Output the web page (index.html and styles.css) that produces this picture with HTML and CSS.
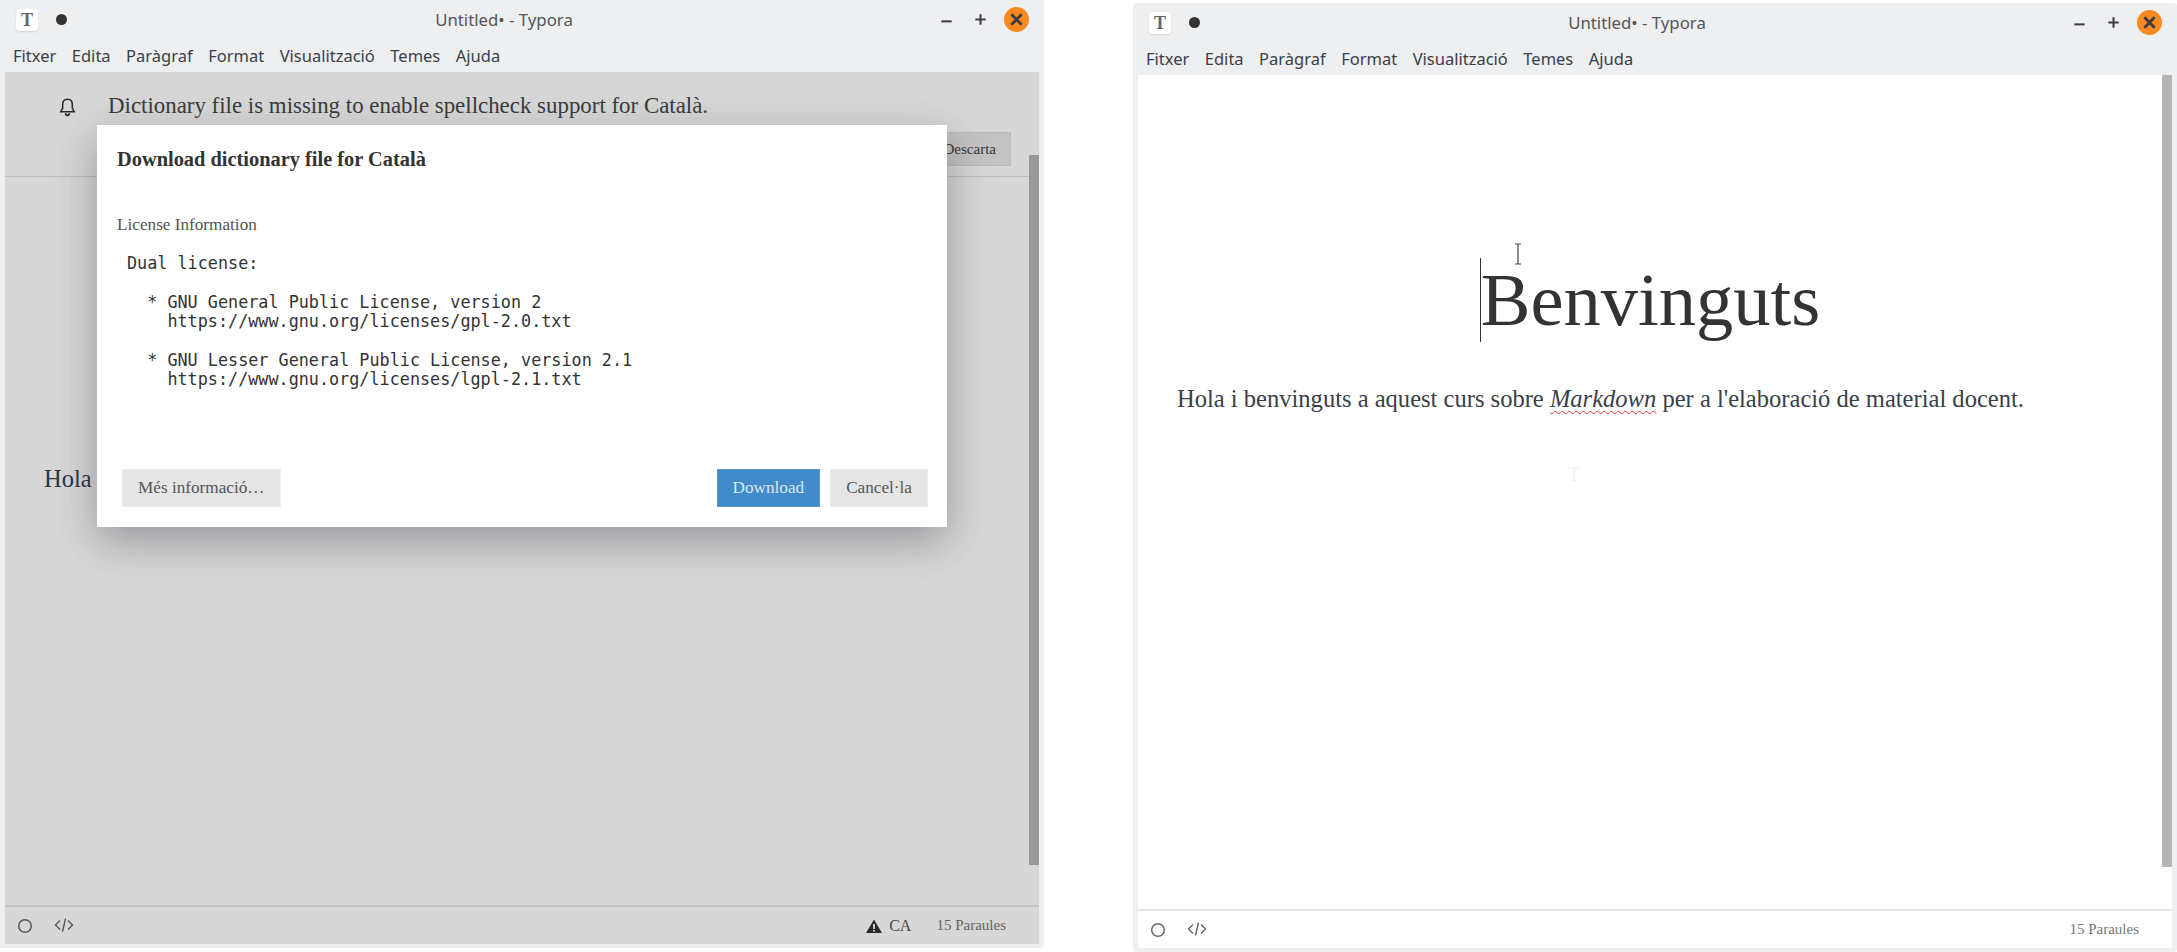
FILE: index.html
```html
<!DOCTYPE html>
<html lang="ca">
<head>
	<meta charset="UTF-8">
	<title>Untitled• - Typora</title>
	<link rel="stylesheet" href="styles.css">
</head>
<body>
	<div class="desktop">

		<div class="window window-left">
			<div class="titlebar">
				<div class="app-icon">T</div>
				<div class="dot"></div>
				<div class="title">Untitled• - Typora</div>
				<div class="controls">
					<svg class="ctl" viewBox="0 0 16 16"><path d="M2.5 10h11" /></svg>
					<svg class="ctl" viewBox="0 0 16 16"><path d="M8 2.5v11M2.5 8h11" /></svg>
					<div class="close"><svg viewBox="0 0 16 16"><path d="M2.5 2.5l11 11M13.5 2.5l-11 11" /></svg></div>
				</div>
			</div>
			<div class="menubar">
				<span>Fitxer</span><span>Edita</span><span>Paràgraf</span><span>Format</span><span>Visualització</span><span>Temes</span><span>Ajuda</span>
			</div>
			<div class="content">
				<div class="editor">
					<div class="notice">
						<svg class="bell" viewBox="0 0 20 20"><path d="M10 2.2c-3 0-4.6 2.3-4.6 5v3.3L3.6 14h12.8l-1.8-3.5V7.2c0-2.7-1.6-5-4.6-5zM8 15.5c.3 1.3 1 2 2 2s1.700-.7 2-2" /></svg>
						<span class="notice-text">Dictionary file is missing to enable spellcheck support for Català.</span>
						<button class="discard">Descarta</button>
					</div>
					<div class="hola">Hola</div>
					<div class="scrollbar scrollbar-left"></div>
				</div>
				<div class="statusbar">
					<svg class="st-circle" viewBox="0 0 16 16"><circle cx="8" cy="8" r="6.300" /></svg>
					<svg class="st-code" viewBox="0 0 20 16"><path d="M6 3.500L1.500 8 6 12.500M14 3.500L18.500 8 14 12.500M11.500 1.500L8.500 14.500" /></svg>
					<div class="st-right">
						<svg class="warn" viewBox="0 0 16 14"><path d="M8 .5L16 14H0zM7.100 5v5h1.800V5zm0 6v1.600h1.800V11z" fill-rule="evenodd" /></svg>
						<span class="lang">CA</span>
						<span class="words">15 Paraules</span>
					</div>
				</div>
				<div class="dim"></div>
			</div>

			<div class="dialog">
				<h2>Download dictionary file for Català</h2>
				<p class="lic-label">License Information</p>
				<pre class="lic-text">Dual license:

  * GNU General Public License, version 2
    https://www.gnu.org/licenses/gpl-2.0.txt

  * GNU Lesser General Public License, version 2.1
    https://www.gnu.org/licenses/lgpl-2.1.txt</pre>
				<div class="dialog-btns">
					<button class="btn">Més informació…</button>
					<button class="btn btn-primary">Download</button>
					<button class="btn">Cancel·la</button>
				</div>
			</div>
		</div>

		<div class="window window-right">
			<div class="titlebar">
				<div class="app-icon">T</div>
				<div class="dot"></div>
				<div class="title">Untitled• - Typora</div>
				<div class="controls">
					<svg class="ctl" viewBox="0 0 16 16"><path d="M2.5 10h11" /></svg>
					<svg class="ctl" viewBox="0 0 16 16"><path d="M8 2.5v11M2.5 8h11" /></svg>
					<div class="close"><svg viewBox="0 0 16 16"><path d="M2.5 2.5l11 11M13.5 2.5l-11 11" /></svg></div>
				</div>
			</div>
			<div class="menubar">
				<span>Fitxer</span><span>Edita</span><span>Paràgraf</span><span>Format</span><span>Visualització</span><span>Temes</span><span>Ajuda</span>
			</div>
			<div class="content">
				<div class="editor doc">
					<h1><span class="caret"></span>Benvinguts</h1>
					<p class="para">Hola i benvinguts a aquest curs sobre <em class="misspelled">Markdown</em> per a l'elaboració de material docent.</p>
					<svg class="ibeam" viewBox="0 0 8 22"><path d="M1 1h6M4 1v20M1 21h6" /></svg>
					<div class="ghost">T</div>
					<div class="scrollbar scrollbar-right"></div>
				</div>
				<div class="statusbar">
					<svg class="st-circle" viewBox="0 0 16 16"><circle cx="8" cy="8" r="6.300" /></svg>
					<svg class="st-code" viewBox="0 0 20 16"><path d="M6 3.500L1.500 8 6 12.500M14 3.500L18.500 8 14 12.500M11.500 1.500L8.500 14.500" /></svg>
					<div class="st-right">
						<span class="words">15 Paraules</span>
					</div>
				</div>
			</div>
		</div>

	</div>
</body>
</html>
```
FILE: styles.css
```css
* {
	box-sizing: border-box;
}

html, body {
	margin: 0;
	height: 100%;
	background: #fff;
	overflow: hidden;
}

.desktop {
	display: flex;
	justify-content: space-between;
	width: 2177px;
	height: 952px;
}

.window {
	position: relative;
	display: flex;
	flex-direction: column;
	width: 1044px;
	background: #eeeff1;
	font-family: "Noto Sans", sans-serif;
	color: #3a3a3a;
}

.window-left {
	height: 948px;
	padding: 0 5px 4px 5px;
	border-bottom-right-radius: 4px;
}

.window-right {
	margin-top: 3px;
	height: 949px;
	padding: 0 5px 4px 5px;
	border-radius: 4px;
}

.titlebar {
	position: relative;
	display: flex;
	align-items: center;
	height: 39px;
	padding-left: 11px;
}

.app-icon {
	width: 22px;
	height: 22px;
	background: #fff;
	border-radius: 4px;
	box-shadow: 0 1px 2px rgba(0, 0, 0, .12);
	font-family: "Liberation Serif", serif;
	font-size: 18px;
	font-weight: bold;
	line-height: 22px;
	text-align: center;
	color: #666;
}

.dot {
	width: 11px;
	height: 11px;
	margin-left: 18px;
	background: #333;
	border-radius: 50%;
}

.title {
	position: absolute;
	left: 0;
	right: 36px;
	text-align: center;
	font-size: 16.800px;
	color: #555;
}

.controls {
	display: flex;
	align-items: center;
	margin-left: auto;
	margin-right: 10px;
}

.ctl {
	width: 15px;
	height: 15px;
	margin-right: 19px;
	fill: none;
	stroke: #3f3f46;
	stroke-width: 2.2;
}

.close {
	display: flex;
	align-items: center;
	justify-content: center;
	width: 25px;
	height: 25px;
	margin-left: -3px;
	background: #f88a1f;
	border-radius: 50%;
}

.close svg {
	width: 15px;
	height: 15px;
	fill: none;
	stroke: #3b3b40;
	stroke-width: 3;
}

.menubar {
	display: flex;
	gap: 15.500px;
	height: 33px;
	padding-left: 8px;
	font-size: 16.500px;
	line-height: 34px;
	color: #3a4048;
}

.content {
	position: relative;
	flex: 1;
	display: flex;
	flex-direction: column;
	background: #fff;
	min-height: 0;
}

.editor {
	position: relative;
	flex: 1;
	overflow: hidden;
	font-family: "Liberation Serif", serif;
}

.notice {
	display: flex;
	height: 105px;
	padding-left: 52px;
	border-bottom: 1px solid #e2e2e2;
}

.bell {
	width: 21px;
	height: 21px;
	margin-top: 25px;
	fill: none;
	stroke: #333;
	stroke-width: 1.500;
}

.notice-text {
	margin-left: 30px;
	margin-top: 21px;
	font-size: 22.900px;
	color: #484848;
}

.discard {
	position: absolute;
	right: 28px;
	top: 60px;
	width: 110px;
	height: 34px;
	background: #e8e8e8;
	border: 1px solid #ddd;
	font-family: "Liberation Serif", serif;
	font-size: 15px;
	color: #444;
	text-align: right;
	padding-right: 14px;
}

.hola {
	padding: 397px 0 0 39px;
	font-size: 24.500px;
	color: #3a4048;
	margin-top: -109px;
}

.scrollbar {
	position: absolute;
	right: 0;
	width: 10px;
	background: #b5b5b5;
}

.scrollbar-left {
	top: 83px;
	height: 710px;
}

.scrollbar-right {
	top: 0;
	height: 792px;
}

.statusbar {
	display: flex;
	align-items: center;
	height: 39px;
	padding: 0 33px 0 12px;
	border-top: 2px solid #e6e6e6;
	flex-shrink: 0;
	font-family: "Liberation Serif", serif;
}

.st-circle {
	width: 16px;
	height: 16px;
	fill: none;
	stroke: #666;
	stroke-width: 1.500;
}

.st-code {
	width: 20px;
	height: 16px;
	margin-left: 21px;
	margin-top: -2px;
	fill: none;
	stroke: #666;
	stroke-width: 1.400;
}

.st-right {
	display: flex;
	align-items: center;
	margin-left: auto;
}

.warn {
	width: 16px;
	height: 14px;
	fill: #333;
	margin-right: 7px;
}

.lang {
	font-size: 16px;
	color: #555;
	margin-right: 25px;
}

.words {
	font-size: 15px;
	color: #777;
}

.dim {
	position: absolute;
	inset: 0;
	background: rgba(0, 0, 0, .155);
}

.dialog {
	position: absolute;
	left: 97px;
	top: 125px;
	width: 850px;
	height: 402px;
	padding: 21px 19px 20px 20px;
	display: flex;
	flex-direction: column;
	background: #fff;
	box-shadow: 0 14px 40px rgba(40, 40, 50, .36);
	font-family: "Liberation Serif", serif;
	color: #333;
}

.dialog h2 {
	margin: 0;
	font-size: 20.400px;
	line-height: 26px;
}

.lic-label {
	margin: 43px 0 0;
	font-size: 17.200px;
	line-height: 20px;
	color: #555;
}

.lic-text {
	margin: 19px 0 0 10px;
	font-family: "DejaVu Sans Mono", monospace;
	font-size: 16.800px;
	line-height: 19.400px;
	color: #333;
}

.dialog-btns {
	display: flex;
	gap: 10px;
	margin-top: auto;
	padding-left: 5px;
}

.btn {
	height: 38px;
	padding: 0 15px;
	background: #e5e5e5;
	border: 1px solid #eee;
	font-family: "Liberation Serif", serif;
	font-size: 17.200px;
	color: #555;
}

.btn-primary {
	margin-left: auto;
	background: #428bca;
	border-color: #5a9bd4;
	color: #d8e8f6;
}

.doc {
	padding: 0 39px;
}

.doc h1 {
	margin: 180px 10px 0 0;
	text-align: center;
	font-size: 74.500px;
	font-weight: normal;
	line-height: 90px;
	color: #333;
}

.caret {
	display: inline-block;
	width: 1px;
	height: 84px;
	margin-bottom: -17px;
	background: #333;
}

.para {
	margin: 40px 0 0;
	font-size: 24.550px;
	color: #3a4048;
	white-space: nowrap;
}

.misspelled {
	text-decoration: underline wavy #e33;
	text-decoration-thickness: 1px;
	text-underline-offset: 3px;
}

.ibeam {
	position: absolute;
	left: 376px;
	top: 168px;
	width: 8px;
	height: 22px;
	fill: none;
	stroke: #444;
	stroke-width: 1.200;
}

.ghost {
	position: absolute;
	left: 430px;
	top: 388px;
	font-size: 20px;
	color: #f2f2f2;
}
```
